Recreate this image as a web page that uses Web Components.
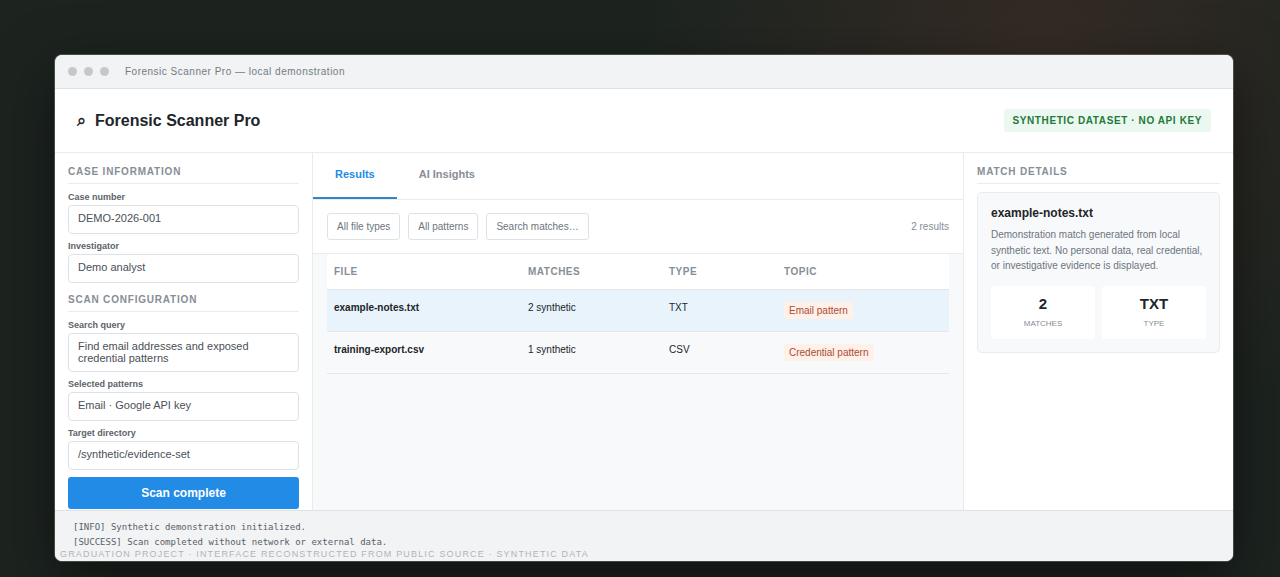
<!DOCTYPE html>
<html lang="en">
<head>
<meta charset="utf-8">
<title>Forensic Scanner Pro</title>
<style>
    body {
        margin: 0;
        font-family: "Liberation Sans", Arial, sans-serif;
        color: #212529;
    }
</style>
</head>
<body>
<fs-stage></fs-stage>
<script>
/** Base for every element: renders styles and body into an open shadow root. */
class FsElement extends HTMLElement {
    constructor() {
        super();
        this.attachShadow({ mode: 'open' });
    }

    connectedCallback() {
        this.shadowRoot.innerHTML = `<style>*{box-sizing:border-box}${this.styles()}</style>${this.body()}`;
    }

    styles() { return ':host{display:block}'; }
    body() { return '<slot></slot>'; }
}

/** Dark backdrop with the window and the caption. */
class FsStage extends FsElement {
    styles() {
        return `
            :host {
                display: block;
                position: relative;
                box-sizing: border-box;
                height: 577px;
                padding: 54px 46px 15px 54px;
                overflow: hidden;
                background:
                    radial-gradient(circle at 1045px 60px, #352b25 0, rgba(53,43,37,0) 400px),
                    #1d2420;
            }
            .caption {
                position: absolute;
                left: 60px;
                top: 549px;
                font-size: 9px;
                line-height: 10px;
                letter-spacing: 1.17px;
                white-space: nowrap;
                color: #b2b5b5;
            }
        `;
    }

    body() {
        return `
            <fs-window></fs-window>
            <div class="caption">GRADUATION PROJECT · INTERFACE RECONSTRUCTED FROM PUBLIC SOURCE · SYNTHETIC DATA</div>
        `;
    }
}

/** Application window: title bar, header, three columns and log. */
class FsWindow extends FsElement {
    styles() {
        return `
            :host {
                display: grid;
                grid-template-rows: 34px 64px 1fr 51px;
                box-sizing: border-box;
                height: 508px;
                border: 1px solid rgba(255,255,255,.2);
                border-radius: 8px;
                overflow: hidden;
                background: #fff;
                background-clip: padding-box;
                box-shadow: 0 20px 60px rgba(0,0,0,.5);
            }
            .columns {
                display: grid;
                grid-template-columns: 258px 1fr 270px;
                min-height: 0;
            }
        `;
    }

    body() {
        return `
            <fs-titlebar>Forensic Scanner Pro — local demonstration</fs-titlebar>
            <fs-header>
                Forensic Scanner Pro
                <span slot="badge">SYNTHETIC DATASET · NO API KEY</span>
            </fs-header>
            <div class="columns">
                <fs-sidebar></fs-sidebar>
                <fs-results></fs-results>
                <fs-details></fs-details>
            </div>
            <fs-log></fs-log>
        `;
    }
}

class FsTitlebar extends FsElement {
    styles() {
        return `
            :host {
                display: flex;
                align-items: center;
                gap: 7px;
                box-sizing: border-box;
                padding: 0 13px;
                border-bottom: 1px solid #dee2e6;
                background: #f1f3f5;
            }
            i { width: 9px; height: 9px; border-radius: 50%; background: #c4c7cb; }
            span { margin-left: 9px; font-size: 10px; letter-spacing: .5px; color: #747b82; }
        `;
    }

    body() { return '<i></i><i></i><i></i><span><slot></slot></span>'; }
}

class FsHeader extends FsElement {
    styles() {
        return `
            :host {
                display: flex;
                align-items: center;
                justify-content: space-between;
                box-sizing: border-box;
                padding: 0 22px;
                border-bottom: 1px solid #e9ecef;
            }
            h1 { display: flex; align-items: baseline; margin: 0; font-size: 16px; line-height: 18px; }
            .mark { width: 18px; }
            .badge {
                padding: 6px 9px;
                border-radius: 3px;
                background: #ebf8ef;
                color: #23783a;
                font-size: 10px;
                font-weight: 700;
                line-height: 11px;
                letter-spacing: .6px;
            }
        `;
    }

    body() {
        return `
            <h1><span class="mark">⌕</span><span><slot></slot></span></h1>
            <div class="badge"><slot name="badge"></slot></div>
        `;
    }
}

/** Section heading with a rule under it. */
class FsHeading extends FsElement {
    styles() {
        return `
            :host {
                display: block;
                box-sizing: border-box;
                height: 18px;
                border-bottom: 1px solid #e9ecef;
                font-size: 10px;
                font-weight: 700;
                line-height: 11px;
                letter-spacing: .8px;
                color: #868e96;
            }
        `;
    }
}

class FsField extends FsElement {
    styles() {
        return `
            :host { display: block; margin-top: 7px; }
            label { display: block; margin-bottom: 3px; font-size: 9px; font-weight: 700; line-height: 10px; color: #5c636a; }
            .value {
                min-height: 29px;
                padding: 6px 9px 7px;
                border: 1px solid #dee2e6;
                border-radius: 4px;
                background: #fff;
                font-size: 11px;
                line-height: 12px;
                color: #495057;
            }
        `;
    }

    body() {
        return `<label>${this.getAttribute('label')}</label><div class="value"><slot></slot></div>`;
    }
}

class FsSidebar extends FsElement {
    styles() {
        return `
            :host {
                display: block;
                box-sizing: border-box;
                padding: 13px 13px 0;
                border-right: 1px solid #e9ecef;
            }
            fs-heading + fs-field { margin-top: 8px; }
            fs-field + fs-heading { margin-top: 11px; }
            button {
                display: block;
                width: 100%;
                height: 32px;
                margin-top: 7px;
                padding: 0;
                border: 0;
                border-radius: 3px;
                background: #228be6;
                color: #fff;
                font: 700 12px "Liberation Sans", Arial, sans-serif;
            }
        `;
    }

    body() {
        return `
            <fs-heading>CASE INFORMATION</fs-heading>
            <fs-field label="Case number">DEMO-2026-001</fs-field>
            <fs-field label="Investigator">Demo analyst</fs-field>
            <fs-heading>SCAN CONFIGURATION</fs-heading>
            <fs-field label="Search query">Find email addresses and exposed credential patterns</fs-field>
            <fs-field label="Selected patterns">Email · Google API key</fs-field>
            <fs-field label="Target directory">/synthetic/evidence-set</fs-field>
            <button>Scan complete</button>
        `;
    }
}

/** One line of the results table. */
class FsRow extends FsElement {
    styles() {
        return `
            :host {
                display: grid;
                grid-template-columns: 194px 141px 115px 1fr;
                align-items: start;
                box-sizing: border-box;
                height: 42px;
                padding: 12px 7px 0;
                border-bottom: 1px solid #e3e7ea;
                font-size: 10px;
                line-height: 12px;
            }
            :host([selected]) { background: #e8f3fc; }
            :host([head]) {
                height: 36px;
                background: #fff;
                color: #868e96;
                font-weight: 700;
                letter-spacing: .5px;
            }
            .tag {
                justify-self: start;
                padding: 3px 5px;
                border-radius: 2px;
                background: #fff0e8;
                color: #ab4c36;
                line-height: 11px;
            }
        `;
    }

    body() {
        const [file, matches, type, topic] = this.getAttribute('cells').split('|');
        if (this.hasAttribute('head')) {
            return `<span>${file}</span><span>${matches}</span><span>${type}</span><span>${topic}</span>`;
        }
        return `<b>${file}</b><span>${matches}</span><span>${type}</span><span class="tag">${topic}</span>`;
    }
}

class FsResults extends FsElement {
    styles() {
        return `
            :host { display: block; background: #f8f9fb; }
            .tabs {
                display: flex;
                height: 47px;
                border-bottom: 1px solid #e9ecef;
                background: #fff;
                font-size: 11px;
                font-weight: 700;
                line-height: 13px;
                color: #868e96;
            }
            .tabs span { padding: 15px 22px 0; }
            .tabs .active { border-bottom: 2px solid #3385c6; color: #228be6; }
            .toolbar {
                display: flex;
                align-items: center;
                gap: 8px;
                height: 54px;
                padding: 0 14px;
                border-bottom: 1px solid #e9ecef;
                background: #fff;
                font-size: 10px;
                color: #6c757d;
            }
            .toolbar span { height: 27px; padding: 0 9px; border: 1px solid #dee2e6; border-radius: 3px; line-height: 25px; }
            .toolbar em { margin-left: auto; font-style: normal; color: #868e96; }
            .table { padding: 0 14px; }
        `;
    }

    body() {
        return `
            <div class="tabs"><span class="active">Results</span><span>AI Insights</span></div>
            <div class="toolbar">
                <span>All file types</span>
                <span>All patterns</span>
                <span>Search matches…</span>
                <em>2 results</em>
            </div>
            <div class="table">
                <fs-row head cells="FILE|MATCHES|TYPE|TOPIC"></fs-row>
                <fs-row selected cells="example-notes.txt|2 synthetic|TXT|Email pattern"></fs-row>
                <fs-row cells="training-export.csv|1 synthetic|CSV|Credential pattern"></fs-row>
            </div>
        `;
    }
}

class FsDetails extends FsElement {
    styles() {
        return `
            :host {
                display: block;
                box-sizing: border-box;
                padding: 13px 13px 0;
                border-left: 1px solid #e9ecef;
            }
            .card {
                height: 161px;
                margin-top: 8px;
                padding: 13px;
                border: 1px solid #e9ecef;
                border-radius: 5px;
                background: #f8f9fb;
            }
            h2 { margin: 0; font-size: 12px; line-height: 14px; }
            p { margin: 7px 0 12px; font-size: 10px; line-height: 15.5px; color: #6c757d; }
            .stats { display: grid; grid-template-columns: 1fr 1fr; gap: 7px; }
            .stats div {
                display: flex;
                flex-direction: column;
                align-items: center;
                height: 53px;
                padding-top: 9px;
                border-radius: 3px;
                background: #fff;
            }
            b { font-size: 15px; line-height: 17px; }
            small { margin-top: 7px; font-size: 8px; line-height: 9px; color: #868e96; }
        `;
    }

    body() {
        return `
            <fs-heading>MATCH DETAILS</fs-heading>
            <div class="card">
                <h2>example-notes.txt</h2>
                <p>Demonstration match generated from local synthetic text. No personal data, real credential, or investigative evidence is displayed.</p>
                <div class="stats">
                    <div><b>2</b><small>MATCHES</small></div>
                    <div><b>TXT</b><small>TYPE</small></div>
                </div>
            </div>
        `;
    }
}

class FsLog extends FsElement {
    styles() {
        return `
            :host {
                display: block;
                box-sizing: border-box;
                padding: 9px 18px 0;
                border-top: 1px solid #dee2e6;
                background: #f1f3f5;
                font: 9px/15px "DejaVu Sans Mono", monospace;
                color: #596068;
            }
        `;
    }

    body() {
        return `
            <div>[INFO] Synthetic demonstration initialized.</div>
            <div>[SUCCESS] Scan completed without network or external data.</div>
        `;
    }
}

customElements.define('fs-heading', FsHeading);
customElements.define('fs-field', FsField);
customElements.define('fs-row', FsRow);
customElements.define('fs-titlebar', FsTitlebar);
customElements.define('fs-header', FsHeader);
customElements.define('fs-sidebar', FsSidebar);
customElements.define('fs-results', FsResults);
customElements.define('fs-details', FsDetails);
customElements.define('fs-log', FsLog);
customElements.define('fs-window', FsWindow);
customElements.define('fs-stage', FsStage);
</script>
</body>
</html>
